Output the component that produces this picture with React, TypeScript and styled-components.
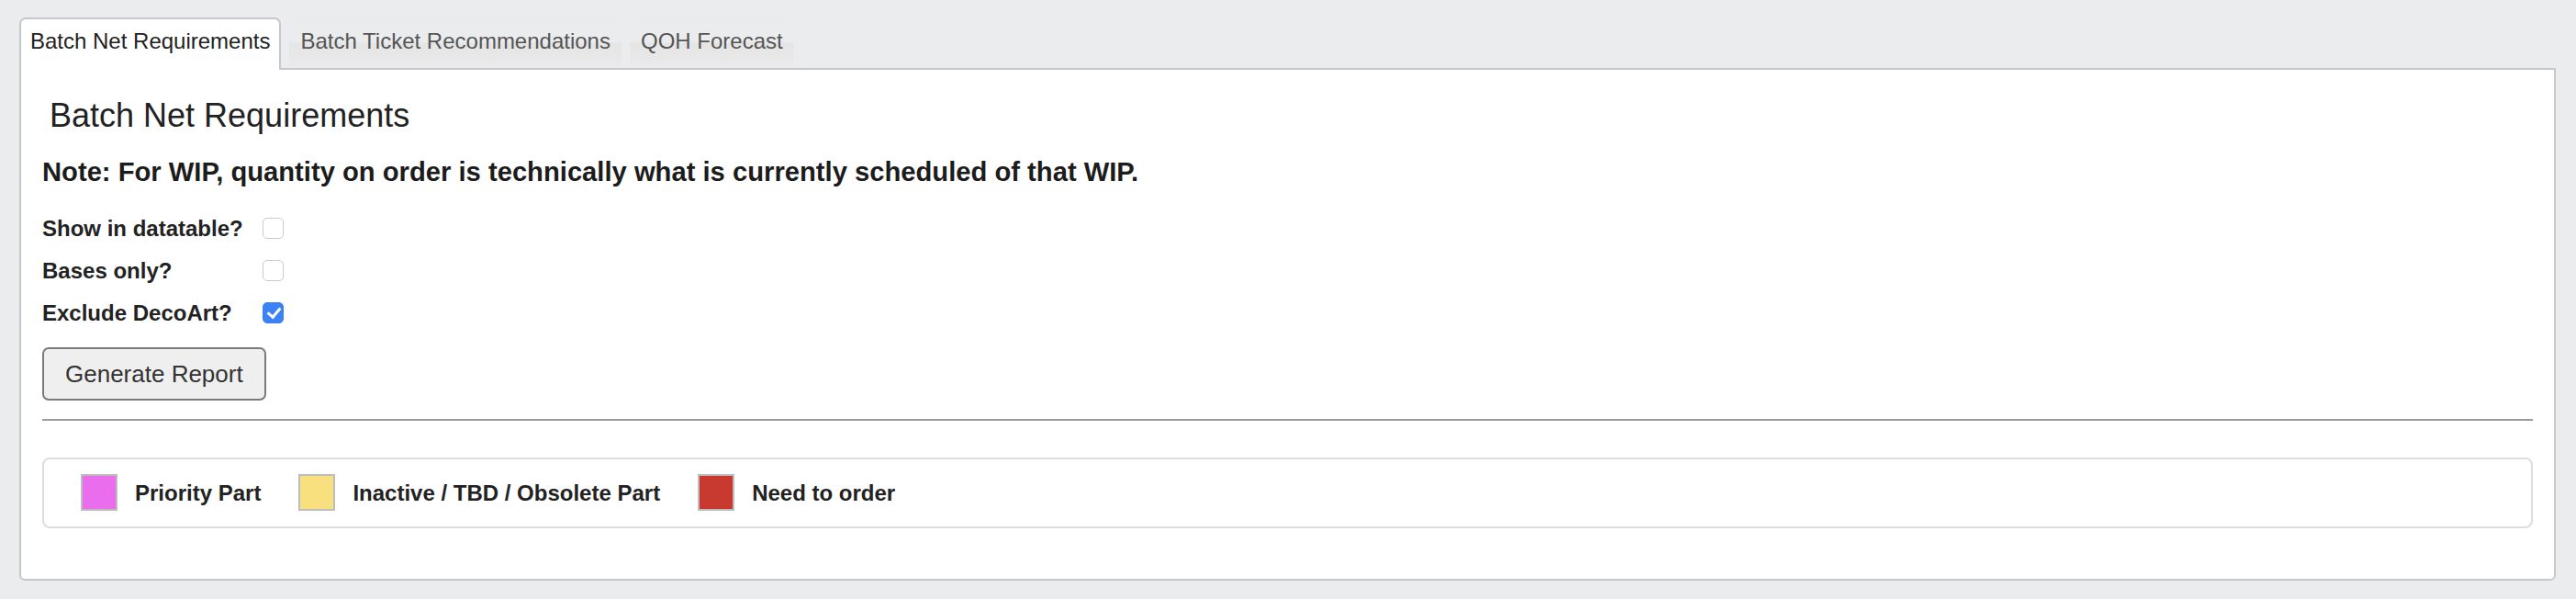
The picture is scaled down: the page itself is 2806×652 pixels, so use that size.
import React from "react";
import styled, { createGlobalStyle } from "styled-components";

const GlobalStyle = createGlobalStyle`
  html, body {
    margin: 0;
    padding: 0;
    background: #ebecee;
  }
  body {
    font-family: "Liberation Sans", Arial, Helvetica, sans-serif;
  }
  * { box-sizing: border-box; }
`;

const Page = styled.div`
  padding: 19px 22px 20px 21px;
`;

const TabNav = styled.ul`
  display: flex;
  align-items: flex-end;
  gap: 9px;
  list-style: none;
  margin: 0;
  padding: 0;
  position: relative;
  z-index: 1;
`;

const Tab = styled.li<{ $active?: boolean }>`
  font-size: 24px;
  line-height: 27px;
  padding: 10px 10px ${(p) => (p.$active ? "18px" : "16px")};
  border: 2px solid ${(p) => (p.$active ? "#c6c7cc" : "transparent")};
  border-bottom: none;
  border-radius: 7px 7px 0 0;
  margin-bottom: ${(p) => (p.$active ? "-2px" : "0")};
  color: ${(p) => (p.$active ? "#222" : "#555")};
  background: ${(p) =>
    p.$active
      ? "#fff"
      : "linear-gradient(to bottom, #ebecee 0%, #ebecee 46%, #e5e5e6 50%, #eaeaeb 100%)"};
  cursor: pointer;
  white-space: nowrap;
`;

const Panel = styled.div`
  background: #fff;
  border: 2px solid #c6c7cc;
  border-radius: 0 0 6px 6px;
  padding: 30px 23px 24px;
`;

const Title = styled.h3`
  margin: 0 0 25px;
  padding-left: 8px;
  font-size: 36px;
  line-height: 40px;
  font-weight: 400;
  color: #222;
`;

const Note = styled.p`
  margin: 0 0 22px;
  font-size: 29.2px;
  line-height: 32px;
  font-weight: 700;
  color: #1c1c1c;
`;

const OptionList = styled.div`
  display: flex;
  flex-direction: column;
`;

const OptionRow = styled.label`
  display: grid;
  grid-template-columns: 240px auto;
  align-items: center;
  height: 46px;
`;

const OptionLabel = styled.span`
  font-size: 24px;
  line-height: 27px;
  font-weight: 700;
  color: #222;
`;

const Checkbox = styled.input.attrs({ type: "checkbox" })`
  appearance: none;
  -webkit-appearance: none;
  position: relative;
  width: 23px;
  height: 23px;
  margin: 0;
  border: 1.5px solid #cbcbcb;
  border-radius: 5px;
  background: #fff;

  &:checked {
    background: #3a82f6;
    border-color: #3a7ff0;
  }
  &:checked::after {
    content: "";
    position: absolute;
    left: 6.5px;
    top: 2.5px;
    width: 6px;
    height: 11px;
    border: solid #fff;
    border-width: 0 3px 3px 0;
    transform: rotate(40deg);
  }
`;

const Button = styled.button`
  display: block;
  margin-top: 15px;
  font-family: inherit;
  font-size: 26px;
  line-height: 30px;
  padding: 12px 23px;
  border: 2px solid #7a7a7a;
  border-radius: 7px;
  background: #efefef;
  color: #333;
`;

const Divider = styled.hr`
  border: none;
  height: 2px;
  background: #9a9a9a;
  margin: 20px 0 0;
`;

const Legend = styled.div`
  display: flex;
  align-items: center;
  gap: 41px;
  border: 2px solid #dcdde1;
  border-radius: 8px;
  padding: 16px 40px 17px;
  margin: 40px 0 31px;
`;

const LegendItem = styled.div`
  display: flex;
  align-items: center;
  gap: 19px;
`;

const Swatch = styled.span<{ $color: string }>`
  display: block;
  width: 40px;
  height: 40px;
  border: 2px solid #bdbdbd;
  background: ${(p) => p.$color};
`;

const LegendLabel = styled.span`
  font-size: 24px;
  line-height: 27px;
  font-weight: 700;
  color: #222;
`;

const tabs = ["Batch Net Requirements", "Batch Ticket Recommendations", "QOH Forecast"];

const options = [
  { label: "Show in datatable?", checked: false },
  { label: "Bases only?", checked: false },
  { label: "Exclude DecoArt?", checked: true },
];

const legend = [
  { label: "Priority Part", color: "#e96ded" },
  { label: "Inactive / TBD / Obsolete Part", color: "#f9e07f" },
  { label: "Need to order", color: "#c8392f" },
];

export default function App() {
  return (
    <>
      <GlobalStyle />
      <Page>
        <TabNav>
          {tabs.map((t, i) => (
            <Tab key={t} $active={i === 0}>
              {t}
            </Tab>
          ))}
        </TabNav>
        <Panel>
          <Title>Batch Net Requirements</Title>
          <Note>Note: For WIP, quantity on order is technically what is currently scheduled of that WIP.</Note>
          <OptionList>
            {options.map((o) => (
              <OptionRow key={o.label}>
                <OptionLabel>{o.label}</OptionLabel>
                <Checkbox defaultChecked={o.checked} />
              </OptionRow>
            ))}
          </OptionList>
          <Button>Generate Report</Button>
          <Divider />
          <Legend>
            {legend.map((l) => (
              <LegendItem key={l.label}>
                <Swatch $color={l.color} />
                <LegendLabel>{l.label}</LegendLabel>
              </LegendItem>
            ))}
          </Legend>
        </Panel>
      </Page>
    </>
  );
}
